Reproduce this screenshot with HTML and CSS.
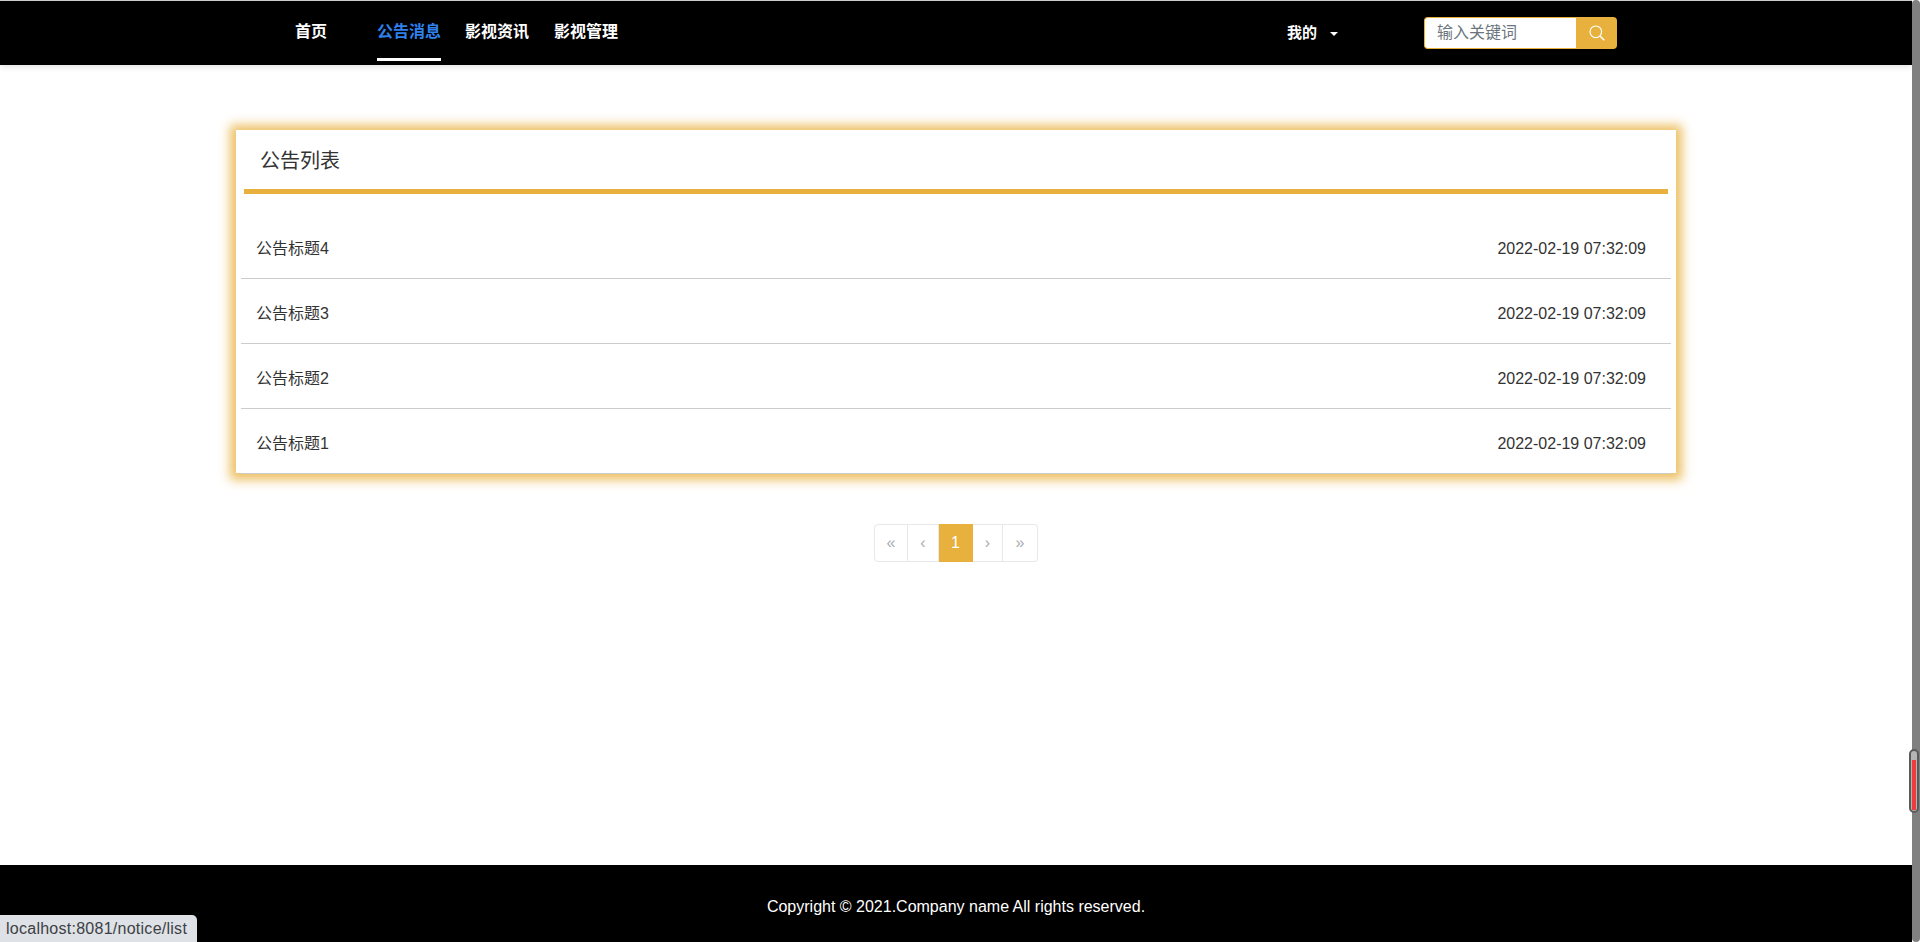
FILE: index.html
```html
<!DOCTYPE html>
<html lang="zh-CN">
<head>
<meta charset="utf-8">
<title>公告列表</title>
<link rel="stylesheet" href="styles.css">
</head>
<body>
<div class="page">
  <header class="nav">
    <nav class="nav-links">
      <a class="nav-link home">首页</a>
      <a class="nav-link active">公告消息</a>
      <a class="nav-link">影视资讯</a>
      <a class="nav-link">影视管理</a>
    </nav>
    <div class="nav-me">我的<span class="caret"></span></div>
    <form class="search">
      <input class="search-input" type="text" placeholder="输入关键词">
      <button class="search-btn" type="button" aria-label="搜索">
        <svg width="16" height="16" viewBox="0 0 16 16" fill="none" stroke="#fff"><circle cx="6.8" cy="6.8" r="5.8" stroke-width="1.2"/><path d="M11 11l4.3 4.3" stroke-width="1.6"/></svg>
      </button>
    </form>
  </header>
  <main class="main">
    <section class="card">
      <h2 class="card-title">公告列表</h2>
      <ul class="notice-list">
        <li class="notice"><span>公告标题4</span><span>2022-02-19 07:32:09</span></li>
        <li class="notice"><span>公告标题3</span><span>2022-02-19 07:32:09</span></li>
        <li class="notice"><span>公告标题2</span><span>2022-02-19 07:32:09</span></li>
        <li class="notice"><span>公告标题1</span><span>2022-02-19 07:32:09</span></li>
      </ul>
    </section>
    <ul class="pager">
      <li class="pg first">«</li>
      <li class="pg second">‹</li>
      <li class="pg current">1</li>
      <li class="pg fourth">›</li>
      <li class="pg last">»</li>
    </ul>
  </main>
  <footer class="footer">Copyright © 2021.Company name All rights reserved.</footer>
</div>
<div class="scroll-track"></div>
<div class="scroll-thumb"><div class="scroll-fill"></div></div>
<div class="status">localhost:8081/notice/list</div>
</body>
</html>
```
FILE: styles.css
```css
* { box-sizing: border-box; }
html, body { margin: 0; height: 942px; overflow: hidden; background: #fff; }
body { font-family: "Liberation Sans", "Noto Sans CJK SC", sans-serif; font-size: 16px; color: #333; }
.page { width: 1912px; height: 942px; display: flex; flex-direction: column; }

.nav { height: 65px; flex: none; background: #000; border-top: 1px solid #ccc; display: flex; align-items: flex-start; color: #fff; box-shadow: 0 2px 6px rgba(0,0,0,.12); position: relative; }
.nav-links { display: flex; margin-left: 295px; width: 992px; height: 64px; }
.nav-link { height: 60px; line-height: 61px; margin-right: 25px; font-weight: 700; font-size: 16px; border-bottom: 3px solid transparent; }
.nav-link.home { margin-right: 50px; }
.nav-link.active { margin-right: 24px; color: #2f80ed; border-bottom-color: #fff; }
.nav-me { width: 137px; height: 64px; line-height: 64px; font-size: 15px; font-weight: 700; display: flex; align-items: center; }
.caret { width: 0; height: 0; margin-left: 13px; margin-top: 2px; border-left: 4px solid transparent; border-right: 4px solid transparent; border-top: 4px solid #fff; }
.search { display: flex; width: 193px; height: 32px; margin-top: 16px; }
.search-input { width: 152px; height: 32px; border: 1px solid #e8b03d; border-right: 0; border-radius: 4px 0 0 4px; padding: 0 12px; font: 16px "Liberation Sans", "Noto Sans CJK SC", sans-serif; outline: 0; background: #fff; }
.search-input::placeholder { color: #6c757d; opacity: 1; }
.search-btn { width: 41px; height: 32px; border: 0; padding: 0; background: #e8b03d; border-radius: 0 4px 4px 0; display: flex; align-items: center; justify-content: center; }

.main { flex: 1; display: flex; flex-direction: column; align-items: center; padding-top: 65px; }
.card { width: 1440px; height: 343px; background: #fff; box-shadow: 0 1px 10px 6px rgba(232,176,61,.8); padding: 0 8px; }
.card-title { margin: 0; height: 64px; padding: 0 0 0 16px; font-size: 20px; font-weight: 400; line-height: 62px; color: #333; border-bottom: 5px solid #e8b03d; }
.notice-list { list-style: none; margin: 20px -3px 0; padding: 0; }
.notice { height: 65px; padding: 21px 25px 0 15px; display: flex; justify-content: space-between; align-items: baseline; font-size: 16px; border-bottom: 1px solid #ccc; color: #333; }

.pager { list-style: none; display: flex; margin: 51px 0 0; padding: 0; height: 38px; }
.pg { height: 38px; line-height: 36px; text-align: center; color: #a9adb3; border: 1px solid #e6e8ea; border-left-width: 0; background: #fff; }
.pg.first { width: 34px; border-left-width: 1px; border-radius: 4px 0 0 4px; }
.pg.second { width: 31px; }
.pg.current { width: 34px; background: #e8b03d; border-color: #e8b03d; color: #fff; font-weight: 400; }
.pg.fourth { width: 30px; }
.pg.last { width: 35px; border-radius: 0 4px 4px 0; }

.footer { height: 77px; flex: none; background: #000; color: #fff; text-align: center; line-height: 84px; font-size: 16px; }

.scroll-track { position: fixed; right: 0; top: 0; width: 8px; height: 942px; background: #808080; border-radius: 4px; }
.scroll-thumb { position: fixed; left: 1909px; top: 749px; width: 10px; height: 64px; background: #b5b5b5; border: 2px solid #5a5a5a; border-radius: 5px; padding: 9px 1px 0; }
.scroll-fill { height: 50px; background: #ee3b3b; }
.status { position: fixed; left: 0; bottom: 0; width: 197px; height: 27px; line-height: 28px; padding-left: 6px; background: #dee1e6; color: #3c4043; font-size: 16px; letter-spacing: .26px; border-top-right-radius: 5px; white-space: nowrap; }
```
